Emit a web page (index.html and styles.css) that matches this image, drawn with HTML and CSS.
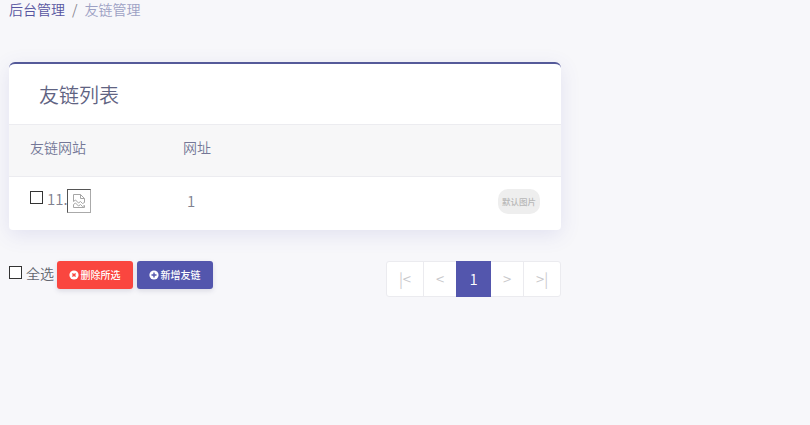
FILE: index.html
```html
<!DOCTYPE html>
<html lang="zh-CN">
<head>
<meta charset="utf-8">
<title>友链管理</title>
<link rel="stylesheet" href="styles.css">
</head>
<body>
<main class="page">
  <nav class="breadcrumb"><a class="crumb-link">后台管理</a><span class="slash">/</span><span class="current">友链管理</span></nav>
  <section class="card">
    <h1 class="title">友链列表</h1>
    <div class="row head"><span>友链网站</span><span>网址</span></div>
    <div class="row item">
      <div class="site"><span class="check"></span><span class="name">11.</span><span class="broken"><svg width="14" height="16" viewBox="0 0 14 16" fill="none" stroke="#a6a6a6"><path d="M1.500 8.500v-7h7l4 4v4M8.500 1.500v4h4M1.500 8.500l2-1.500 3 3 2-1.500 2 2 2-1M1.500 14.500v-3l2-1.500 3 3 2-1.500 2 2 2-1v2z"/></svg></span></div>
      <span class="url">1</span>
      <span class="badge">默认图片</span>
    </div>
  </section>
  <footer class="actions">
    <span class="check"></span><span class="all">全选</span>
    <button class="btn danger"><svg width="10" height="10" viewBox="0 0 10 10"><circle cx="5" cy="5" r="4.600" fill="#fff"/><path d="M3.400 3.400l3.200 3.200M6.600 3.400l-3.200 3.200" stroke="#fa463f" stroke-width="1.400"/></svg><span>删除所选</span></button>
    <button class="btn primary"><svg width="10" height="10" viewBox="0 0 10 10"><circle cx="5" cy="5" r="4.600" fill="#fff"/><path d="M5 2.500v5M2.500 5h5" stroke="#5356ad" stroke-width="1.400"/></svg><span>新增友链</span></button>
    <div class="pager"><span class="end">|&lt;</span><span>&lt;</span><span class="active">1</span><span>&gt;</span><span class="end">&gt;|</span></div>
  </footer>
</main>
</body>
</html>
```
FILE: styles.css
```css
* { box-sizing: border-box; }
body {
  margin: 0;
  height: 425px;
  overflow: hidden;
  background: #f7f7fa;
  color: #71748d;
  font-family: "Noto Sans CJK SC", sans-serif;
  font-size: 14px;
  font-weight: 350;
}
.page { width: 552px; margin-left: 9px; }
.breadcrumb { display: flex; height: 62px; line-height: 18px; }
.crumb-link { color: #5654a0; }
.slash { margin: 0 7px; color: #85838c; }
.current { color: #9da1c4; }
.card {
  height: 168px;
  background: #fff;
  border-top: 2px solid #555a99;
  border-radius: 6px 6px 4px 4px;
  box-shadow: 0 5px 20px rgba(82, 85, 175, .13);
}
.title {
  height: 60px;
  margin: 0;
  padding-left: 30px;
  color: #5f6382;
  font-size: 20px;
  font-weight: 350;
  line-height: 62px;
}
.row {
  display: grid;
  grid-template-columns: 153px 1fr auto;
  padding: 0 21px;
}
.head {
  height: 53px;
  border: 1px solid #ececf0;
  border-width: 1px 0;
  background: #f7f7f8;
  color: #747797;
  line-height: 44px;
}
.item { height: 53px; padding-top: 12px; }
.site { display: flex; align-items: flex-start; }
.check {
  flex: none;
  width: 13px;
  height: 13px;
  margin-top: 2px;
  border: 1px solid #333;
  background: #fff;
}
.name { width: 20px; margin-left: 4px; line-height: 19px; color: #80818f; font-size: 15px; }
.broken {
  display: grid;
  place-items: center;
  width: 24px;
  height: 24px;
  border: 1px solid;
  border-color: #555 #aaa #aaa #555;
}
.url { padding-left: 4px; line-height: 24px; color: #80818f; font-size: 15px; }
.badge {
  width: 42px;
  height: 25px;
  border-radius: 10px;
  background: #eee;
  color: #b7b7b7;
  font-size: 8.5px;
  font-weight: 500;
  line-height: 25px;
  text-align: center;
}
.actions { display: flex; align-items: flex-start; margin-top: 31px; }
.actions .check { margin-top: 5px; }
.all { width: 31px; margin-left: 4px; line-height: 24px; color: #62656f; }
.btn {
  display: flex;
  align-items: center;
  justify-content: center;
  gap: 2px;
  width: 76px;
  height: 28px;
  margin-right: 4px;
  padding: 0 1px 0 0;
  border: 0;
  border-radius: 3px;
  color: #fff;
  font: 500 10px/28px "Noto Sans CJK SC", sans-serif;
  box-shadow: 0 2px 5px rgba(60, 60, 100, .15);
}
.btn span { height: 28px; }
.danger { background: #fa463f; }
.primary { background: #5356ad; }
.pager {
  display: flex;
  height: 36px;
  margin-left: auto;
  border: 1px solid #ebebef;
  border-radius: 3px;
  background: #fff;
  color: #c8c8cb;
  font-size: 15px;
  line-height: 34px;
  text-align: center;
}
.pager span { width: 33px; border-left: 1px solid #ebebef; }
.pager .end { width: 37px; }
.pager span:first-child { width: 36px; border: 0; }
.pager .active {
  width: 35px;
  margin: -1px 0;
  border: 0;
  background: #5356ad;
  color: #fff;
  line-height: 36px;
}
.pager .active + span { width: 32px; border: 0; }
```
